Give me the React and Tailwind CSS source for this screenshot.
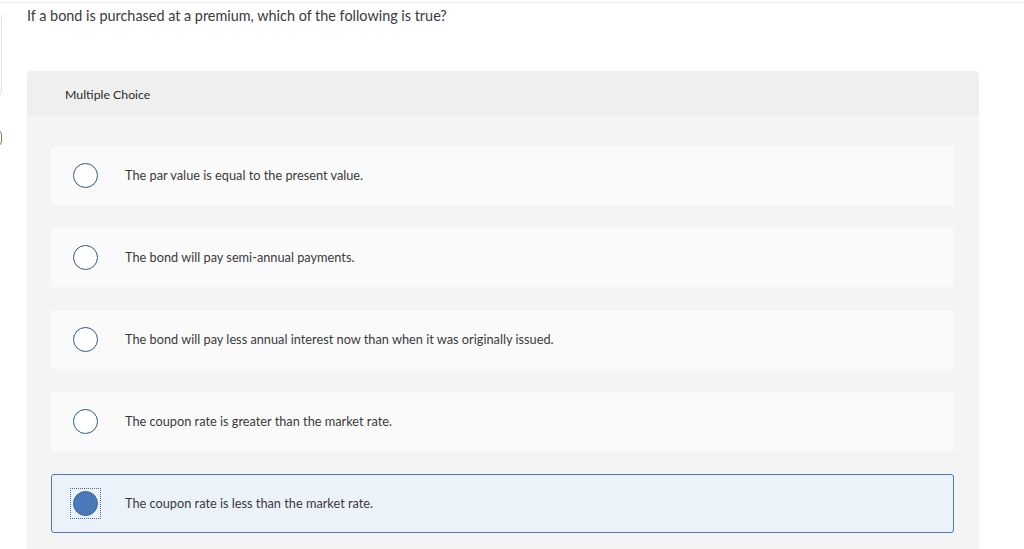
import React from "react";

const options = [
  "The par value is equal to the present value.",
  "The bond will pay semi-annual payments.",
  "The bond will pay less annual interest now than when it was originally issued.",
  "The coupon rate is greater than the market rate.",
  "The coupon rate is less than the market rate.",
];

export default function App() {
  return (
    <div
      className="relative w-[1024px] h-[549px] overflow-hidden bg-white text-[#333]"
      style={{ fontFamily: "Lato, 'Liberation Sans', sans-serif" }}
    >
      <div className="h-[3px] border-b border-[#ececec]" />
      {/* left fragments */}
      <div className="absolute left-[-8px] top-[14px] w-[10px] h-[82px] border border-[#e2e2e2] rounded-[4px]" />
      <div className="absolute left-[-10px] top-[129px] w-[12px] h-[18px] border border-[#5f8f4a] rounded-full" />

      <div className="pl-[27px] pr-[45px]">
        <div className="pt-[3px] h-[68px] text-[14.4px] leading-[20px] text-[#3a3a3a]">
          If a bond is purchased at a premium, which of the following is true?
        </div>
        <div className="rounded-t-[4px] bg-[#f4f4f4]">
          <div className="h-[45px] pt-[3px] bg-[#efefef] rounded-t-[4px] flex items-center pl-[38px] text-[12.3px] text-[#2a2a2a]">
            Multiple Choice
          </div>
          <div className="pl-[24px] pr-[25px] pt-[30px] pb-[20px] flex flex-col gap-[23px]">
            {options.map((o, i) => {
              const sel = i === 4;
              return (
                <div
                  key={i}
                  className={
                    sel
                      ? "h-[59px] flex items-center rounded-[3px] border border-[#4a7bc0] bg-[#ecf2fa] pl-[18px]"
                      : "h-[59px] flex items-center rounded-[3px] bg-[#fafafa] pl-[22px]"
                  }
                >
                  {sel ? (
                    <div className="w-[31px] h-[31px] mr-[24px] border border-dotted border-[#3b6fb8] flex items-center justify-center">
                      <div className="w-[25px] h-[25px] rounded-full bg-[#4a78b8] border border-[#3a679f]" />
                    </div>
                  ) : (
                    <div className="w-[25px] h-[25px] mr-[27px] rounded-full border-[1.5px] border-[#30598c] bg-white" />
                  )}
                  <span className="text-[12.75px] pt-[1px] text-[#3a3a3a]">{o}</span>
                </div>
              );
            })}
          </div>
        </div>
      </div>
    </div>
  );
}
